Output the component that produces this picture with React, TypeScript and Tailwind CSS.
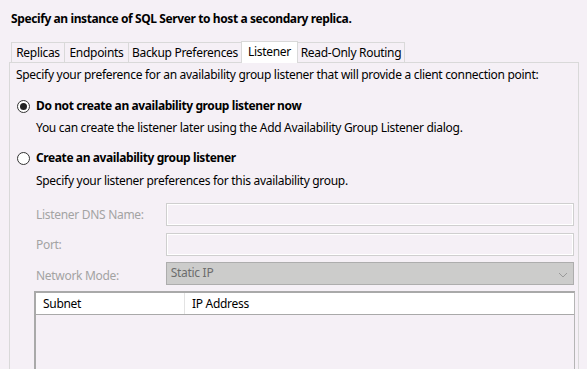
const font = { fontFamily: '"Noto Sans", "Open Sans", sans-serif' }

function Radio({ checked }: { checked?: boolean }) {
  return (
    <span className="w-[13px] h-[13px] rounded-full border border-[#333333] bg-white flex items-center justify-center shrink-0">
      {checked && <span className="w-[7px] h-[7px] rounded-full bg-[#222222]" />}
    </span>
  )
}

const tabs = [
  { label: 'Replicas', w: 'w-[54px]' },
  { label: 'Endpoints', w: 'w-[65px]' },
  { label: 'Backup Preferences', w: 'w-[114px]' },
  { label: 'Listener', w: 'w-[57px]', active: true },
  { label: 'Read-Only Routing', w: 'w-[108px]' },
]

export default function App() {
  return (
    <div className="w-[587px] h-[369px] bg-[#f5f0f6] overflow-hidden flex flex-col text-[12px] leading-[16px] text-black tracking-[-0.3px]" style={font}>
      <div className="pl-[11px] pt-[11px] font-bold tracking-[-0.4px]">Specify an instance of SQL Server to host a secondary replica.</div>

      <div className="flex items-end pl-[11px] mt-[14px] h-[21px] relative z-10">
        {tabs.map(t => (
          <div
            key={t.label}
            className={t.active
              ? `${t.w} h-[22px] -mb-[1px] bg-white border border-[#d9d9d9] border-b-0 flex items-center justify-center pb-[2px] -ml-[1px]`
              : `${t.w} h-[20px] border border-[#d9d9d9] border-b-0 flex items-center justify-center -ml-[1px] first:ml-0`}
          >
            {t.label}
          </div>
        ))}
      </div>

      <div className="ml-[9px] w-[570px] flex-1 border border-b-0 border-[#d9d9d9] flex flex-col pl-[6px] pr-[4px]">
        <div className="mt-[4px]">Specify your preference for an availability group listener that will provide a client connection point:</div>

        <div className="mt-[15px] flex items-center gap-[6px] pl-[1px] font-bold tracking-[-0.4px]">
          <Radio checked />
          <span>Do not create an availability group listener now</span>
        </div>
        <div className="mt-[6px] pl-[20px]">You can create the listener later using the Add Availability Group Listener dialog.</div>

        <div className="mt-[14px] flex items-center gap-[6px] pl-[1px] font-bold tracking-[-0.4px]">
          <Radio />
          <span>Create an availability group listener</span>
        </div>
        <div className="mt-[7px] pl-[20px]">Specify your listener preferences for this availability group.</div>

        <div className="mt-[14px] flex items-center pl-[20px]">
          <span className="w-[130px] text-[#a3a3a3]">Listener DNS Name:</span>
          <div className="w-[409px] h-[23px] border border-[#cfcfcf] shadow-[inset_0_0_0_1px_#ffffff]" />
        </div>
        <div className="mt-[7px] flex items-center pl-[20px]">
          <span className="w-[130px] text-[#a3a3a3]">Port:</span>
          <div className="w-[409px] h-[23px] border border-[#cfcfcf] shadow-[inset_0_0_0_1px_#ffffff]" />
        </div>
        <div className="mt-[6px] flex items-center pl-[20px]">
          <span className="w-[130px] text-[#a3a3a3] pt-[4px]">Network Mode:</span>
          <div className="w-[409px] h-[23px] border border-[#adadad] bg-[#cccccb] flex items-center justify-between pl-[4px] pr-[5px] text-[#6d6d6d]">
            <span className="-mt-[2px]">Static IP</span>
            <svg width="10" height="6" viewBox="0 0 10 6" className="mt-[2px]">
              <path d="M1 1 L5 5 L9 1" fill="none" stroke="#9a9a9a" strokeWidth="1" />
            </svg>
          </div>
        </div>

        <div className="mt-[6px] ml-[18px] w-[541px] flex-1 border-t-2 border-l-2 border-r border-[#a9a9a9] border-r-[#b5b5b5]">
          <div className="h-[22px] bg-white border-b border-[#a9a9a9] flex items-center">
            <span className="w-[149px] pl-[7px] h-full flex items-center border-r border-[#e3e3e3]">Subnet</span>
            <span className="pl-[7px]">IP Address</span>
          </div>
        </div>
      </div>
    </div>
  )
}
